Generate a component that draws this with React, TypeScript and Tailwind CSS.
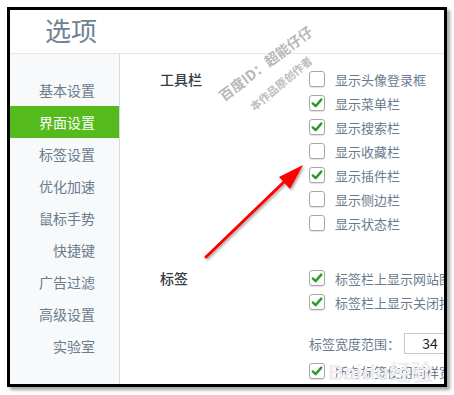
import React from "react";

const font = { fontFamily: '"Noto Sans CJK SC", "Noto Sans", sans-serif' };

function Box({ checked }: { checked: boolean }) {
  return (
    <span className="w-[16px] h-[16px] rounded-[3px] border border-[#a8a8a8] bg-white shadow-[0_1px_1px_rgba(0,0,0,0.12)] flex items-center justify-center shrink-0">
      {checked && (
        <svg width="12" height="12" viewBox="0 0 12 12">
          <path d="M1.8 6.4 L4.6 9.1 L10.3 2.6" fill="none" stroke="#2a9a2a" strokeWidth="2.4" strokeLinecap="round" strokeLinejoin="round" />
        </svg>
      )}
    </span>
  );
}

function Row({ checked, label }: { checked: boolean; label: string }) {
  return (
    <div className="h-[24px] flex items-center gap-[10px] whitespace-nowrap">
      <Box checked={checked} />
      <span className="text-[13px] text-[#6a7b8d] leading-none">{label}</span>
    </div>
  );
}

const nav = ["基本设置", "界面设置", "标签设置", "优化加速", "鼠标手势", "快捷键", "广告过滤", "高级设置", "实验室"];

export default function App() {
  return (
    <div className="w-[454px] h-[395px] bg-white relative overflow-hidden" style={font}>
      <div className="absolute left-[7px] top-[7px] w-[440px] h-[380px] border-[3px] border-black bg-white shadow-[3px_3px_3px_rgba(0,0,0,0.35)] overflow-hidden flex flex-col">
        <div className="h-[44px] shrink-0 border-b border-[#e6e6e6] flex items-center pl-[35px] pb-[4px]">
          <span className="text-[26px] leading-none text-[#6f8193]">选项</span>
        </div>
        <div className="flex flex-1 min-h-0">
          <div className="w-[110px] shrink-0 bg-[#f7f9fb] border-r border-[#d6d9dd] pt-[20px]">
            {nav.map((n) => (
              <div
                key={n}
                className={
                  "h-[32px] flex items-center justify-end pr-[24px] text-[14px] leading-none " +
                  (n === "界面设置" ? "bg-[#55bb1c] text-white" : "text-[#6b7b8c]")
                }
              >
                {n}
              </div>
            ))}
          </div>
          <div className="flex-1 min-w-0 pl-[40px] pt-[13px] overflow-hidden">
            <div className="flex">
              <div className="w-[149px] shrink-0 h-[24px] flex items-center text-[14px] font-medium text-[#333b45]">工具栏</div>
              <div className="flex flex-col">
                <Row checked={false} label="显示头像登录框" />
                <Row checked={true} label="显示菜单栏" />
                <Row checked={true} label="显示搜索栏" />
                <Row checked={false} label="显示收藏栏" />
                <Row checked={true} label="显示插件栏" />
                <Row checked={false} label="显示侧边栏" />
                <Row checked={false} label="显示状态栏" />
              </div>
            </div>
            <div className="flex mt-[31px]">
              <div className="w-[149px] shrink-0 h-[24px] flex items-center text-[14px] font-medium text-[#333b45]">标签</div>
              <div className="flex flex-col">
                <Row checked={true} label="标签栏上显示网站图标" />
                <Row checked={true} label="标签栏上显示关闭按钮" />
                <div className="mt-[19px] h-[21px] flex items-center whitespace-nowrap">
                  <span className="text-[13px] text-[#6a7b8d] w-[95px] shrink-0">标签宽度范围：</span>
                  <span className="w-[52px] h-[21px] shrink-0 border border-[#c8c8c8] bg-white flex items-center justify-center text-[14px] text-[#222]">34</span>
                </div>
                <div className="mt-[5px]">
                  <Row checked={true} label="所有标签使用同样宽度" />
                </div>
              </div>
            </div>
          </div>
        </div>
        {/* watermark texts */}
        <div className="absolute left-[199px] top-[44px] rotate-[-37deg] text-[14px] leading-[18px] font-bold text-[#b8b8b8] whitespace-nowrap pointer-events-none">
          百度ID：超能仔仔
        </div>
        <div className="absolute left-[232px] top-[66px] rotate-[-40deg] text-[11px] leading-[14px] font-bold text-[#bdbdbd] whitespace-nowrap pointer-events-none">
          本作品原创作者
        </div>
        <div className="absolute left-[318px] top-[346px] text-[22px] font-bold text-[#eeeeee] whitespace-nowrap pointer-events-none" style={{ fontFamily: '"Liberation Sans", "Noto Sans CJK SC", sans-serif' }}>
          Baidu经验
        </div>
        {/* red arrow */}
        <svg className="absolute left-0 top-0 pointer-events-none" width="440" height="380" viewBox="0 0 440 380">
          <defs>
            <filter id="sh" x="-20%" y="-20%" width="140%" height="140%">
              <feDropShadow dx="1.5" dy="1.5" stdDeviation="1" floodColor="#000" floodOpacity="0.35" />
            </filter>
          </defs>
          <g filter="url(#sh)" transform="translate(-10,-10)">
            <line x1="206" y1="257" x2="286" y2="180" stroke="#ff0000" strokeWidth="3" strokeLinecap="round" />
            <polygon points="303,165 279,177 290,189" fill="#ff0000" />
          </g>
        </svg>
      </div>
    </div>
  );
}
